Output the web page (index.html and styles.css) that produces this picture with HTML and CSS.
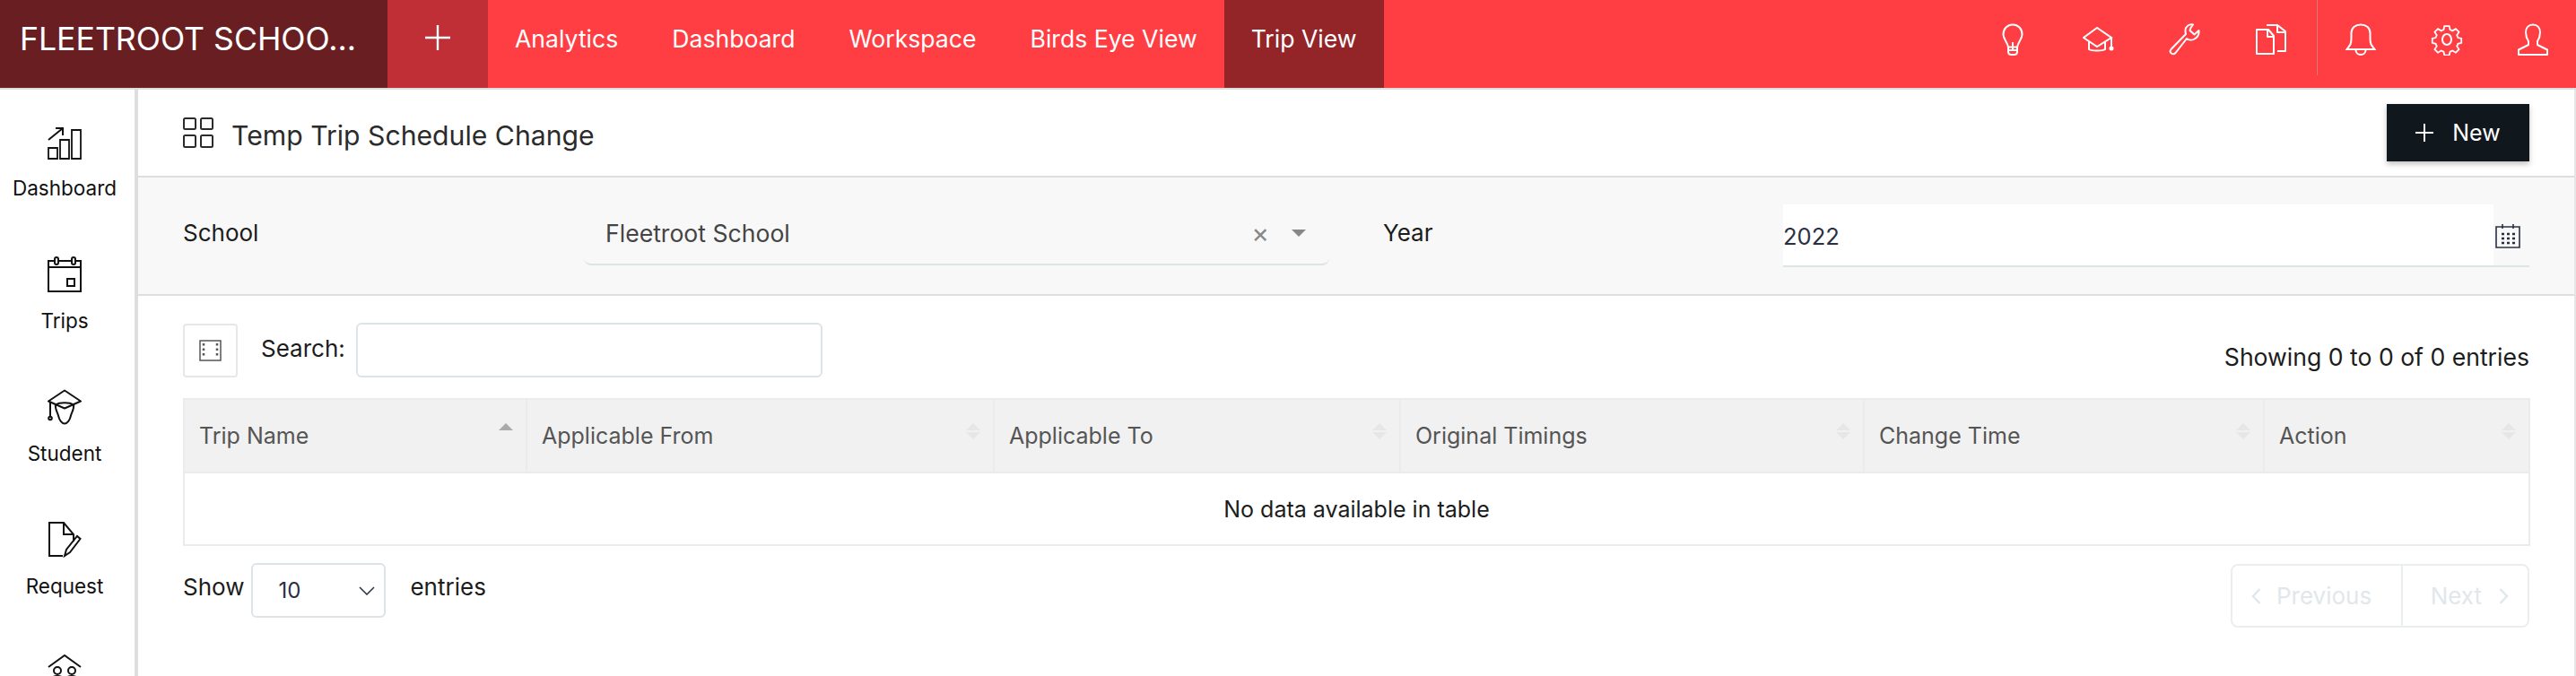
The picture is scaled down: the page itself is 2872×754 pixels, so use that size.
FILE: index.html
```html
<!DOCTYPE html>
<html lang="en">
<head>
    <meta charset="UTF-8">
    <title>Temp Trip Schedule Change</title>
    <link rel="stylesheet" href="styles.css">
</head>
<body>
    <!-- top bar -->
    <header class="topbar">
        <div class="brand">FLEETROOT SCHOO...</div>
        <div class="add-btn">
            <svg width="30" height="30" viewBox="0 0 30 30"><path d="M15 1v28M1 15h28" stroke="#fff" stroke-width="2.4"/></svg>
        </div>
        <nav class="nav">
            <a class="nav-link">Analytics</a>
            <a class="nav-link">Dashboard</a>
            <a class="nav-link">Workspace</a>
            <a class="nav-link">Birds Eye View</a>
            <a class="nav-link active">Trip View</a>
        </nav>
        <div class="top-icons first">
            <span class="top-icon"><svg width="26" height="36" viewBox="0 0 26 36" fill="none" stroke="#fff" stroke-width="2"><path d="M13 1.500C7 1.500 2.500 6 2.500 12.500c0 5 4.500 8.500 5.500 14h10c1-5.500 5.500-9 5.500-14C23.500 6 19 1.500 13 1.500z"/><path d="M8 26.500v5c0 2 1.500 3.500 3.500 3.500h3c2 0 3.500-1.500 3.500-3.500v-5M8 30h10M13 21v9"/></svg></span>
            <span class="top-icon"><svg width="36" height="28" viewBox="0 0 36 28" fill="none" stroke="#fff" stroke-width="2"><path d="M16 1L1 12l15 10 16-10z"/><path d="M7 16v9c3 2 15 2 18 0v-9M32 12v10"/><circle cx="32" cy="24" r="1.500" fill="#fff"/></svg></span>
            <span class="top-icon"><svg width="36" height="36" viewBox="0 0 36 36" fill="none" stroke="#fff" stroke-width="2" stroke-linejoin="round"><path d="M27 1.500c-4-1-9 2-8.500 7.500 0 1.500.5 2.500.5 3L2.500 29c-1.500 2-1 3.500.5 4.500 1.500 1.200 3 1 4.500-.5L20 17c2 1.500 6 2.500 9.500 0 3-2 4.500-5 4-9l-5 4.500-5-4.500 1-3z"/></svg></span>
            <span class="top-icon"><svg width="36" height="36" viewBox="0 0 36 36" fill="none" stroke="#fff" stroke-width="2" stroke-linejoin="round"><path d="M2 7h13l6 7v20H2z"/><path d="M14 7v8h7M13 2h12l9 7v22h-9"/><path d="M25 2v8h9"/></svg></span>
        </div>
        <span class="top-sep"></span>
        <div class="top-icons">
            <span class="top-icon"><svg width="34" height="36" viewBox="0 0 34 36" fill="none" stroke="#fff" stroke-width="2"><path d="M1.500 29c3-4 5-5 5-12V11C6.500 5 11 1.500 17 1.500S27.500 5 27.500 11v6c0 7 2 8 5 12z"/><path d="M11.500 29.500c0 3.500 2.500 5.500 5.500 5.500s5.500-2 5.500-5.500"/></svg></span>
            <span class="top-icon"><svg width="36" height="36" viewBox="0 0 36 36" fill="none" stroke="#fff" stroke-width="2"><path d="M15 1.500h6l1 4.500 3 1.300 4-2.500 4 4-2.500 4 1.300 3 4.200 1v5.500l-4.200 1-1.300 3 2.500 4-4 4-4-2.500-3 1.300-1 4.400h-6l-1-4.400-3-1.300-4 2.500-4-4 2.500-4-1.300-3-4.200-1v-5.500l4.200-1 1.300-3-2.500-4 4-4 4 2.500 3-1.300z" transform="translate(1.800 1.800) scale(.9)"/><ellipse cx="18" cy="18" rx="5" ry="6"/></svg></span>
            <span class="top-icon"><svg width="36" height="36" viewBox="0 0 36 36" fill="none" stroke="#fff" stroke-width="2" stroke-linejoin="round"><path d="M18 1.500c-5 0-8 3.500-8 8.500 0 4 1 7 3 10v4L2 29.500v5.500h32v-5.500L23 24v-4c2-3 3-6 3-10 0-5-3-8.500-8-8.500z"/></svg></span>
        </div>
    </header>

    <div class="main">
        <!-- left menu -->
        <aside class="sidebar">
            <div class="side-item">
                <svg width="38" height="40" viewBox="0 0 38 40" fill="none" stroke="#111" stroke-width="2"><path d="M1 39V27h10v12zM14 39V18h10v21zM27 39V7h10v32z" stroke-width="1.800"/><path d="M1 18L17 5M9 5h8v8"/></svg>
                <span>Dashboard</span>
            </div>
            <div class="side-item">
                <svg width="38" height="40" viewBox="0 0 38 40" fill="none" stroke="#111" stroke-width="2"><path d="M1 5h36v34H1zM1 12h36"/><rect x="8" y="1" width="4" height="8" rx="2" fill="#fff"/><rect x="27" y="1" width="4" height="8" rx="2" fill="#fff"/><rect x="22" y="25" width="8" height="8"/></svg>
                <span>Trips</span>
            </div>
            <div class="side-item">
                <svg width="38" height="40" viewBox="0 0 38 39" fill="none" stroke="#111" stroke-width="2" stroke-linejoin="round"><path d="M19 1L1 13l18 8 18-8z"/><path d="M9 16c-1 6 2 9 3 13 1 5 4 9 7 9s6-4 7-9c1-4 4-7 3-13M9 17c4-3 16-3 20 0M3 14v16"/><circle cx="3" cy="32" r="1.800"/></svg>
                <span>Student</span>
            </div>
            <div class="side-item">
                <svg width="38" height="40" viewBox="0 0 38 40" fill="none" stroke="#111" stroke-width="2"><path d="M17 38H2V1h16l11 13v8M18 1v13h11"/><path d="M19 38l2-7 12-15 3.500 3L25 34z"/></svg>
                <span>Request</span>
            </div>
            <div class="side-item">
                <svg width="38" height="40" viewBox="0 0 38 40" fill="none" stroke="#111" stroke-width="2"><path d="M1 14L19 1l18 13"/><circle cx="11" cy="18" r="4"/><circle cx="27" cy="18" r="4"/><path d="M3 32c0-6 4-8 8-8s7 2 8 5c1-3 4-5 8-5s8 2 8 8"/></svg>
            </div>
        </aside>

        <main class="content">
            <div class="page-head">
                <div class="page-title">
                    <svg width="34" height="34" viewBox="0 0 34 34" fill="none" stroke="#2b2b2b" stroke-width="2"><rect x="1" y="1" width="13" height="12" rx="1.500"/><rect x="20" y="1" width="13" height="12" rx="1.500"/><rect x="1" y="20" width="13" height="13" rx="1.500"/><rect x="20" y="20" width="13" height="13" rx="1.500"/></svg>
                    <h1>Temp Trip Schedule Change</h1>
                </div>
                <button class="new-btn">
                    <svg width="20" height="20" viewBox="0 0 20 20"><path d="M10 0v20M0 10h20" stroke="#fff" stroke-width="2"/></svg>
                    New
                </button>
            </div>

            <div class="filters">
                <label class="filter-label">School</label>
                <div class="school-select">
                    <span>Fleetroot School</span>
                    <span class="clear-x">×</span>
                    <span class="caret"></span>
                </div>
                <label class="filter-label year-label">Year</label>
                <div class="year-field">
                    <span class="year-value">2022</span>
                    <svg width="28" height="28" viewBox="0 0 28 28" fill="none" stroke="#2b2f42" stroke-width="1.600"><path d="M1 4h26v23H1zM8 1v5M20 1v5"/><path d="M7 12h3M13 12h3M19 12h3M7 17h3M13 17h3M19 17h3M7 22h3M13 22h3M19 22h3" stroke-width="2.400"/></svg>
                </div>
            </div>

            <div class="table-area">
                <div class="table-top">
                    <button class="col-toggle">
                        <svg width="25" height="24" viewBox="0 0 25 24" fill="none" stroke="#555" stroke-width="1.500"><rect x="1" y="1" width="23" height="22"/><path d="M5 4v16M20 4v16" stroke-width="2.500" stroke-dasharray="2.500 3"/></svg>
                    </button>
                    <label class="search-label">Search:</label>
                    <input class="search-input" type="text">
                    <div class="info">Showing 0 to 0 of 0 entries</div>
                </div>

                <table class="data-table">
                    <thead>
                        <tr>
                            <th class="col-name sorted">Trip Name</th>
                            <th class="col-from">Applicable From</th>
                            <th class="col-to">Applicable To</th>
                            <th class="col-orig">Original Timings</th>
                            <th class="col-change">Change Time</th>
                            <th class="col-action">Action</th>
                        </tr>
                    </thead>
                    <tbody>
                        <tr><td colspan="6">No data available in table</td></tr>
                    </tbody>
                </table>

                <div class="table-bottom">
                    <div class="length">
                        <label>Show</label>
                        <div class="length-select">
                            <span>10</span>
                            <svg width="18" height="10" viewBox="0 0 18 10" fill="none" stroke="#2b2f42" stroke-width="1.500"><path d="M1 1l8 8 8-8"/></svg>
                        </div>
                        <label class="entries">entries</label>
                    </div>
                    <div class="pager">
                        <span class="page-btn prev">
                            <svg width="11" height="18" viewBox="0 0 11 18" fill="none" stroke="#e1e7ea" stroke-width="2.500"><path d="M9.500 1L2 9l7.500 8"/></svg>
                            Previous
                        </span>
                        <span class="page-btn next">
                            Next
                            <svg width="11" height="18" viewBox="0 0 11 18" fill="none" stroke="#e1e7ea" stroke-width="2.500"><path d="M1.500 1L9 9l-7.500 8"/></svg>
                        </span>
                    </div>
                </div>
            </div>
        </main>
    </div>
</body>
</html>
```

FILE: styles.css
```css
* {
    box-sizing: border-box;
}
html, body {
    margin: 0;
    height: 754px;
    overflow: hidden;
}
body {
    font-family: Inter, Lato, sans-serif;
    font-size: 26px;
    color: #1c1c1c;
    background-color: white;
}

/* top bar */
.topbar {
    display: flex;
    height: 100px;
    background-color: #ff3e44;
    border-bottom: 2px solid #dedede;
    color: white;
}
.brand {
    width: 432px;
    padding: 0 0 12px 22px;
    background-color: #691f22;
    display: flex;
    align-items: center;
    font-size: 35.6px;
    white-space: nowrap;
}
.add-btn {
    width: 112px;
    background-color: #bf2f35;
    display: flex;
    align-items: center;
    justify-content: center;
    padding-bottom: 14px;
}
.nav {
    display: flex;
    flex: 1;
}
.nav-link {
    padding: 24px 30px 0;
    font-size: 26.6px;
    line-height: 38px;
}
.nav-link.active {
    background-color: #932529;
}
.top-icons {
    display: flex;
}
.top-icons.first {
    padding-right: 2px;
}
.top-icon {
    width: 96px;
    height: 88px;
    display: flex;
    align-items: center;
    justify-content: center;
}
.top-sep {
    width: 2px;
    height: 84px;
    border-left: 1px solid #dc454a;
    border-right: 1px solid #ff6d72;
}

/* left menu */
.main {
    display: flex;
    height: 654px;
    overflow: hidden;
}
.sidebar {
    width: 154px;
    flex-shrink: 0;
    border-right: 4px solid #dedede;
    padding: 38px 6px 0 0;
    background-color: white;
}
.side-item {
    height: 148px;
    display: flex;
    flex-direction: column;
    align-items: center;
    font-size: 22.5px;
}
.side-item svg {
    flex-shrink: 0;
}
.side-item span {
    margin-top: 17px;
    line-height: 30px;
    color: #111;
}

/* content */
.content {
    flex: 1;
    border-right: 2px solid #e6e6e6;
    min-width: 0;
}
.page-head {
    height: 98px;
    border-bottom: 2px solid #dedede;
    padding: 16px 50px 0;
    display: flex;
    justify-content: space-between;
}
.page-title {
    display: flex;
    align-items: center;
    gap: 20px;
    height: 64px;
}
.page-title h1 {
    margin: 0;
    padding-top: 6px;
    font-size: 30.2px;
    font-weight: 400;
    color: #2b2b2b;
}
.new-btn {
    width: 159px;
    height: 64px;
    border: none;
    background-color: #10171d;
    color: white;
    font: inherit;
    font-size: 25px;
    display: flex;
    align-items: center;
    justify-content: center;
    gap: 21px;
    box-shadow: 0 3px 6px rgba(0, 0, 0, 0.25);
}

.filters {
    height: 132px;
    background-color: #f8f8f8;
    border-bottom: 2px solid #dedede;
    padding: 30px 50px 0;
    display: flex;
}
.filter-label {
    width: 447px;
    line-height: 64px;
    color: #1c1c1c;
}
.school-select {
    width: 831px;
    height: 68px;
    padding: 0 25px 3px 24px;
    display: flex;
    align-items: center;
    border-bottom: 2px solid #dce4e6;
    border-radius: 0 0 8px 8px;
    color: #444;
    font-size: 26.6px;
}
.clear-x {
    margin-left: auto;
    color: #888;
    font-size: 30px;
    margin-right: 25px;
}
.caret {
    width: 0;
    height: 0;
    margin-right: 1px;
    border-left: 8px solid transparent;
    border-right: 8px solid transparent;
    border-top: 8px solid #888;
}
.year-label {
    width: 446px;
    margin-left: 60px;
}
.year-field {
    flex: 1;
    height: 70px;
    display: flex;
    align-items: center;
    justify-content: space-between;
    padding: 2px 10px 0 0;
    border-bottom: 2px solid #dce4e6;
    background: linear-gradient(to right, white 792px, transparent 792px);
    color: #2b2f42;
    font-size: 25.5px;
}

/* table block */
.table-area {
    padding: 30px 50px 0;
}
.table-top {
    display: flex;
    align-items: center;
    height: 61px;
    margin-bottom: 23px;
}
.col-toggle {
    width: 61px;
    height: 60px;
    background-color: white;
    border: 2px solid #e5e8ea;
    border-radius: 4px;
    padding: 0;
    display: flex;
    align-items: center;
    justify-content: center;
}
.search-label {
    margin-left: 26px;
    padding-bottom: 5px;
    color: #1c1c1c;
}
.search-input {
    width: 520px;
    height: 61px;
    margin-left: 12px;
    border: 2px solid #dce4e8;
    border-radius: 6px;
    outline: none;
}
.info {
    margin-left: auto;
    padding-top: 14px;
    font-size: 26.6px;
    color: #1c1c1c;
}

.data-table {
    width: 2615px;
    table-layout: fixed;
    border-collapse: collapse;
    font-size: 25px;
}
.data-table th {
    position: relative;
    height: 82px;
    padding: 0 16px;
    text-align: left;
    font-weight: 400;
    color: #555;
    background-color: #f1f1f1;
    border: 2px solid #ebebeb;
}
/* sort arrows */
.data-table th::before,
.data-table th::after {
    content: "";
    position: absolute;
    right: 14px;
    border-left: 8px solid transparent;
    border-right: 8px solid transparent;
}
.data-table th::before {
    top: 26px;
    border-bottom: 8px solid #e6e6e6;
}
.data-table th::after {
    top: 36px;
    border-top: 8px solid #e6e6e6;
}
.data-table th.sorted::before {
    border-bottom-color: #aaa;
}
.data-table th.sorted::after {
    border-top-color: transparent;
}
.data-table td {
    height: 81px;
    text-align: center;
    border: 2px solid #ebebeb;
    color: #1c1c1c;
}
.col-name { width: 382px; }
.col-from { width: 521px; }
.col-to { width: 453px; }
.col-orig { width: 517px; }
.col-change { width: 446px; }
.col-action { width: 296px; }

.table-bottom {
    display: flex;
    justify-content: space-between;
    margin-top: 19px;
}
.length {
    display: flex;
    align-items: flex-start;
    height: 61px;
    line-height: 54px;
}
.length-select {
    width: 150px;
    height: 61px;
    margin-left: 8px;
    padding: 0 10px 0 28px;
    border: 2px solid #dce4e8;
    border-radius: 6px;
    display: flex;
    align-items: center;
    justify-content: space-between;
    color: #2b2f42;
    font-size: 24px;
}
.entries {
    margin-left: 27px;
}
.pager {
    display: flex;
    width: 333px;
    height: 71px;
    margin-top: 1px;
    border: 2px solid #ebeeef;
    border-radius: 8px;
    color: #e1e7ea;
    font-size: 26px;
}
.page-btn {
    display: flex;
    align-items: center;
    gap: 17px;
    padding: 0 21px;
    white-space: nowrap;
}
.prev {
    width: 190px;
    border-right: 2px solid #ebeeef;
}
.next {
    flex: 1;
    justify-content: flex-end;
    gap: 19px;
}
```
